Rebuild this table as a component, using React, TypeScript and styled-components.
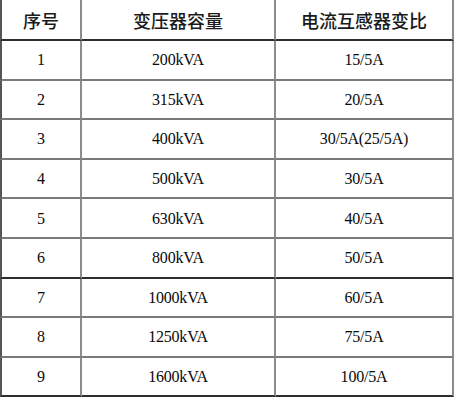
import React from "react";
import styled, { createGlobalStyle } from "styled-components";

const rows = [
  { no: "1", capacity: "200kVA", ratio: "15/5A" },
  { no: "2", capacity: "315kVA", ratio: "20/5A" },
  { no: "3", capacity: "400kVA", ratio: "30/5A(25/5A)" },
  { no: "4", capacity: "500kVA", ratio: "30/5A" },
  { no: "5", capacity: "630kVA", ratio: "40/5A" },
  { no: "6", capacity: "800kVA", ratio: "50/5A" },
  { no: "7", capacity: "1000kVA", ratio: "60/5A" },
  { no: "8", capacity: "1250kVA", ratio: "75/5A" },
  { no: "9", capacity: "1600kVA", ratio: "100/5A" },
];

// rows after which the rule is drawn heavier
const strongAfter = ["6", "9"];

const App = () => {
  return (
    <>
      <GlobalStyle />
      <Table>
        <HeadCell $first $strong>序号</HeadCell>
        <HeadCell $strong>变压器容量</HeadCell>
        <HeadCell $strong>电流互感器变比</HeadCell>
        {rows.map((row) => {
          const strong = strongAfter.includes(row.no);
          return (
            <Row key={row.no}>
              <Cell $first $strong={strong}>{row.no}</Cell>
              <Cell $strong={strong}>{row.capacity}</Cell>
              <Cell $strong={strong}>{row.ratio}</Cell>
            </Row>
          );
        })}
      </Table>
    </>
  );
};

export default App;

const GlobalStyle = createGlobalStyle`
  html, body {
    margin: 0;
    padding: 0;
    background: #ffffff;
  }
`;

const Table = styled.div`
  display: grid;
  grid-template-columns: 82px 194px 178px;
  grid-template-rows: 41px repeat(9, 39.6px);
  width: 454px;
  background: #ffffff;
`;

const Row = styled.div`
  display: contents;
`;

const Cell = styled.div<{ $first?: boolean; $strong?: boolean }>`
  box-sizing: border-box;
  display: flex;
  align-items: center;
  justify-content: center;
  border-right: 2px solid #8c8c8c;
  border-left: ${(p) => (p.$first ? "2px solid #555" : "none")};
  border-bottom: 2px solid ${(p) => (p.$strong ? "#2e2e2e" : "#7a7a7a")};
  font-family: "Liberation Serif", "Noto Sans CJK SC", serif;
  font-size: 16px;
  letter-spacing: -0.2px;
  color: #0a0a0a;
  padding-top: 1px;
`;

const HeadCell = styled(Cell)`
  font-family: "Noto Sans CJK SC", "Noto Sans", sans-serif;
  font-size: 18px;
  font-weight: 500;
  letter-spacing: 0;
  color: #1a1a1a;
  padding-top: 0;
`;
